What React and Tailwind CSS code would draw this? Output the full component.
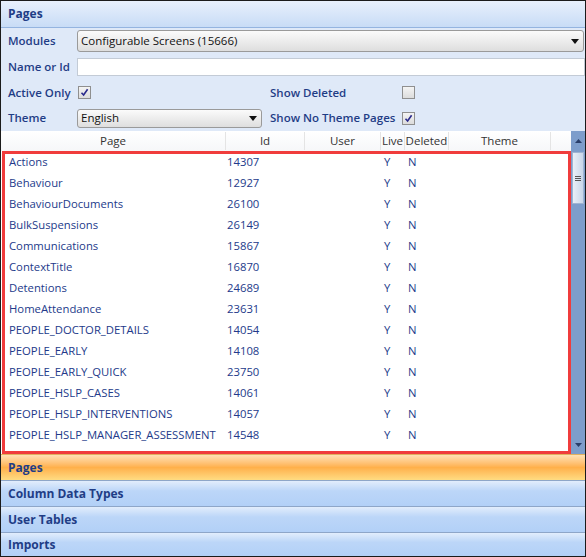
import React from 'react';

const rows = [
  ['Actions', '14307'],
  ['Behaviour', '12927'],
  ['BehaviourDocuments', '26100'],
  ['BulkSuspensions', '26149'],
  ['Communications', '15867'],
  ['ContextTitle', '16870'],
  ['Detentions', '24689'],
  ['HomeAttendance', '23631'],
  ['PEOPLE_DOCTOR_DETAILS', '14054'],
  ['PEOPLE_EARLY', '14108'],
  ['PEOPLE_EARLY_QUICK', '23750'],
  ['PEOPLE_HSLP_CASES', '14061'],
  ['PEOPLE_HSLP_INTERVENTIONS', '14057'],
  ['PEOPLE_HSLP_MANAGER_ASSESSMENT', '14548'],
  ['PEOPLE_LATE', '14107'],
];

const Check = ({ checked }) => (
  <div className="w-[13px] h-[13px] shrink-0 border border-[#8f8f8f] bg-gradient-to-b from-[#f4f4f4] to-[#dcdcdc] flex items-center justify-center">
    {checked && (
      <svg width="9" height="9" viewBox="0 0 9 9">
        <path d="M1.5 4.8 L3.6 7 L7.6 1.2" fill="none" stroke="#2a2a8c" strokeWidth="1.6" />
      </svg>
    )}
  </div>
);

const Arrow = () => (
  <svg width="8" height="5" viewBox="0 0 8 5">
    <path d="M0 0 H8 L4 5 Z" fill="#111" />
  </svg>
);

const Label = ({ children, className = '' }) => (
  <span className={`shrink-0 whitespace-nowrap text-[11.5px] font-semibold text-[#1f3d86] ${className}`}>{children}</span>
);

const Section = ({ title, active, last }) => (
  <div
    className={`${last ? 'flex-1' : 'h-[26px]'} flex items-center px-[7px] border-t ${
      active
        ? 'border-[#e0b060] bg-gradient-to-b from-[#ffe1b4] via-[#ffb04a] to-[#ffdc82]'
        : 'border-[#8ea6c8] bg-gradient-to-b from-[#e2edfc] from-0% via-[#bcd6f8] via-40% to-[#b2d0f7]'
    }`}
  >
    <span className="text-[12px] font-bold text-[#1f3d86] whitespace-nowrap">{title}</span>
  </div>
);

export default function App() {
  return (
    <div
      className="w-[586px] h-[557px] border border-[#1b1b1b] bg-[#dfe9f8] flex flex-col overflow-hidden"
      style={{ fontFamily: '"Open Sans", "Noto Sans", sans-serif' }}
    >
      <div className="h-[27px] shrink-0 flex items-center px-[7px] border-b border-[#94b4e0] bg-gradient-to-b from-[#e8f0fc] to-[#c8dcf6]">
        <span className="text-[12px] font-bold text-[#1f3d86]">Pages</span>
      </div>

      <div className="flex flex-col pl-[7px] shrink-0">
        <div className="h-[26px] flex items-center">
          <Label className="w-[69px]">Modules</Label>
          <div className="flex-1 mr-[1px] h-[22px] rounded-[3px] border border-[#9a9a9a] bg-gradient-to-b from-[#fbfbfb] to-[#dedede] flex items-center justify-between pl-[3px] pr-[4px]">
            <span className="text-[11.5px] text-[#111]">Configurable Screens (15666)</span>
            <Arrow />
          </div>
        </div>
        <div className="h-[26px] flex items-center">
          <Label className="w-[69px]">Name or Id</Label>
          <div className="flex-1 h-[18px] border border-[#c3cbd6] bg-white" />
        </div>
        <div className="h-[25px] flex items-center">
          <Label className="w-[70px]">Active Only</Label>
          <Check checked />
          <Label className="ml-[179px] w-[132px]">Show Deleted</Label>
          <Check />
        </div>
        <div className="h-[26px] flex items-center">
          <Label className="w-[69px]">Theme</Label>
          <div className="w-[185px] h-[19px] rounded-[3px] border border-[#9a9a9a] bg-gradient-to-b from-[#fbfbfb] to-[#dedede] flex items-center justify-between pl-[3px] pr-[4px]">
            <span className="text-[11.5px] text-[#111]">English</span>
            <Arrow />
          </div>
          <Label className="ml-[8px] w-[132px]">Show No Theme Pages</Label>
          <Check checked />
        </div>
      </div>

      <div className="flex h-[323px] shrink-0">
        <div className="flex-1 flex flex-col bg-white">
          <div className="h-[20px] flex items-center text-[11.5px] text-[#333] bg-gradient-to-b from-white to-[#f6f7f9]">
            <div className="w-[225px] text-center border-r border-[#e4e4e4]">Page</div>
            <div className="w-[79px] text-center border-r border-[#e4e4e4]">Id</div>
            <div className="w-[76px] text-center border-r border-[#e4e4e4]">User</div>
            <div className="w-[24px] text-center border-r border-[#e4e4e4]">Live</div>
            <div className="w-[44px] text-center border-r border-[#e4e4e4]">Deleted</div>
            <div className="w-[102px] text-center border-r border-[#e4e4e4]">Theme</div>
            <div className="flex-1" />
          </div>
          <div className="ml-[1px] h-[303px] border-[3px] border-[#f03c3c] overflow-hidden">
            <div className="-mt-[2px]">
              {rows.map(([name, id]) => (
                <div key={id} className="h-[21px] flex items-center text-[11.3px] text-[#233a8a] whitespace-nowrap">
                  <div className="w-[222px] pl-[4px]">{name}</div>
                  <div className="w-[157px]">{id}</div>
                  <div className="w-[24px]">Y</div>
                  <div>N</div>
                </div>
              ))}
            </div>
          </div>
        </div>
        <div className="w-[14px] flex flex-col bg-[#7d9dcb]">
          <div className="h-[20px] flex items-center justify-center">
            <svg width="7" height="4" viewBox="0 0 7 4">
              <path d="M0 4 H7 L3.5 0 Z" fill="#2a3f6a" />
            </svg>
          </div>
          <div className="mt-[1px] ml-[1px] w-[12px] h-[52px] bg-gradient-to-r from-[#e9eff7] to-[#c9d7ea] border border-[#9fb4d2] flex flex-col items-center justify-center gap-[1px]">
            <div className="w-[6px] h-[1px] bg-[#555]" />
            <div className="w-[6px] h-[1px] bg-[#555]" />
            <div className="w-[6px] h-[1px] bg-[#555]" />
          </div>
          <div className="flex-1" />
          <div className="h-[19px] flex items-center justify-center">
            <svg width="7" height="4" viewBox="0 0 7 4">
              <path d="M0 0 H7 L3.5 4 Z" fill="#2a3f6a" />
            </svg>
          </div>
        </div>
      </div>

      <div className="flex-1 flex flex-col">
        <Section title="Pages" active />
        <Section title="Column Data Types" />
        <Section title="User Tables" />
        <Section title="Imports" last />
      </div>
    </div>
  );
}
